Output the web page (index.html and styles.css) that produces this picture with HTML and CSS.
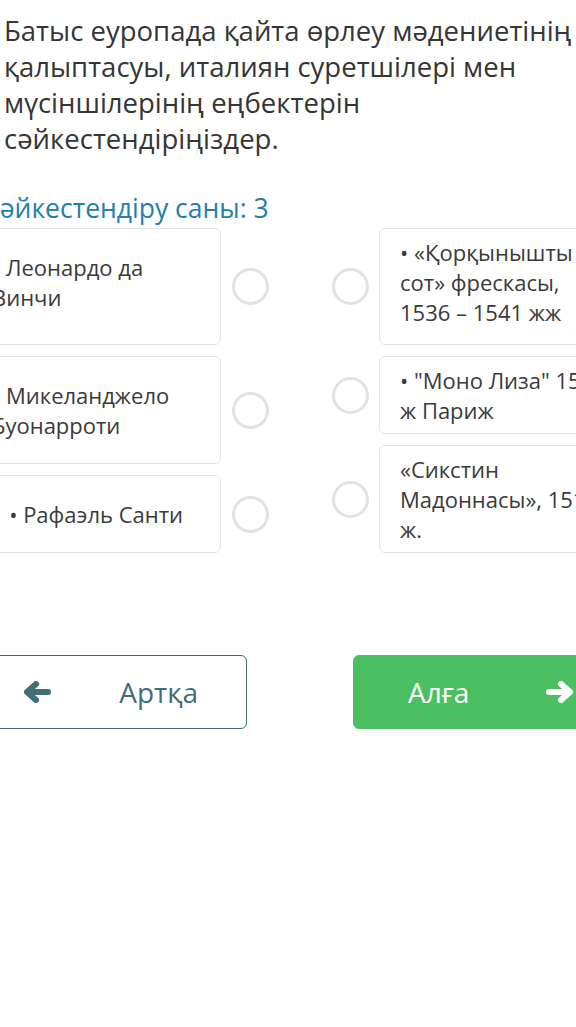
FILE: index.html
```html
<!DOCTYPE html>
<html lang="kk">

<head>
    <meta charset="UTF-8">
    <meta name="viewport" content="width=device-width, initial-scale=1.0">
    <title>Сәйкестендіру</title>
    <link rel="stylesheet" href="styles.css">
</head>

<body>
    <div class="page">
        <p class="question">Батыс еуропада қайта өрлеу мәдениетінің қалыптасуы, италиян суретшілері мен мүсіншілерінің еңбектерін сәйкестендіріңіздер.</p>
        <div class="count">Сәйкестендіру саны: 3</div>

        <div class="match">
            <div class="column">
                <div class="item size-l">
                    <div class="card">• Леонардо да Винчи</div>
                    <span class="dot"></span>
                </div>
                <div class="item size-m">
                    <div class="card">• Микеланджело Буонарроти</div>
                    <span class="dot"></span>
                </div>
                <div class="item size-s">
                    <div class="card">&nbsp;&nbsp;&nbsp;• Рафаэль Санти</div>
                    <span class="dot"></span>
                </div>
            </div>
            <div class="column right">
                <div class="item size-l">
                    <span class="dot"></span>
                    <div class="card">• «Қорқынышты<br>сот» фрескасы,<br>1536 – 1541 жж</div>
                </div>
                <div class="item size-s">
                    <span class="dot"></span>
                    <div class="card">• "Моно Лиза" 1503<br>ж Париж</div>
                </div>
                <div class="item size-m">
                    <span class="dot"></span>
                    <div class="card">«Сикстин<br>Мадоннасы», 1513<br>ж.</div>
                </div>
            </div>
        </div>

        <div class="nav">
            <button class="btn back">
                <svg width="28" height="22" viewBox="0 0 28 22"><path d="M25 11H5M13 3L4 11l9 8" fill="none" stroke="currentColor" stroke-width="6" stroke-linecap="round" stroke-linejoin="round"/></svg>
                <span>Артқа</span>
            </button>
            <button class="btn next">
                <span>Алға</span>
                <svg width="28" height="22" viewBox="0 0 28 22"><path d="M3 11h20M15 3l9 8-9 8" fill="none" stroke="currentColor" stroke-width="6" stroke-linecap="round" stroke-linejoin="round"/></svg>
            </button>
        </div>
    </div>
</body>

</html>
```

FILE: styles.css
```css
html,
body {
    overflow: hidden;
}

body {
    margin: 0;
    background: #fff;
    font-family: 'Open Sans', sans-serif;
    color: #353535;
}

.page {
    width: 652px;
    margin-left: -26px;
}

.question {
    margin: 13px 0 0;
    padding: 0 30px;
    font-size: 27.5px;
    line-height: 36px;
}

.count {
    margin-top: 35px;
    padding-left: 9px;
    font-size: 26.5px;
    line-height: 32px;
    color: #2180ad;
}

.match {
    display: flex;
    justify-content: space-between;
    margin-top: 4px;
}

.column {
    display: flex;
    flex-direction: column;
    gap: 11px;
}

.item {
    display: flex;
    align-items: center;
    gap: 11px;
}

.right .item {
    gap: 10px;
}

.card {
    box-sizing: border-box;
    width: 247px;
    height: 100%;
    display: flex;
    align-items: center;
    padding: 4px 20px 4px 17px;
    border: 1px solid #e2e4e4;
    border-radius: 6px;
    font-size: 22px;
    line-height: 30px;
    color: #3a3a3a;
}

.right .card {
    padding-left: 20px;
    white-space: nowrap;
}

.size-l {
    height: 117px;
}

.size-l .card {
    padding-bottom: 14px;
}

.size-m {
    height: 108px;
}

.size-s {
    height: 78px;
}

.dot {
    box-sizing: border-box;
    width: 37px;
    height: 37px;
    border: 3px solid #e1e3e3;
    border-radius: 50%;
}

.nav {
    display: flex;
    justify-content: space-between;
    margin-top: 102px;
}

.btn {
    box-sizing: border-box;
    width: 273px;
    height: 74px;
    display: flex;
    align-items: center;
    justify-content: space-between;
    padding: 0 48px;
    border-radius: 6px;
    font-family: 'Open Sans', sans-serif;
    font-size: 28px;
    cursor: pointer;
}

.back {
    background: #fff;
    border: 1px solid #3f6a75;
    color: #3f6e7a;
}

.next {
    padding: 0 51px 0 54px;
    background: #4cbf63;
    border: 1px solid #4cbf63;
    color: #fff;
}
```
